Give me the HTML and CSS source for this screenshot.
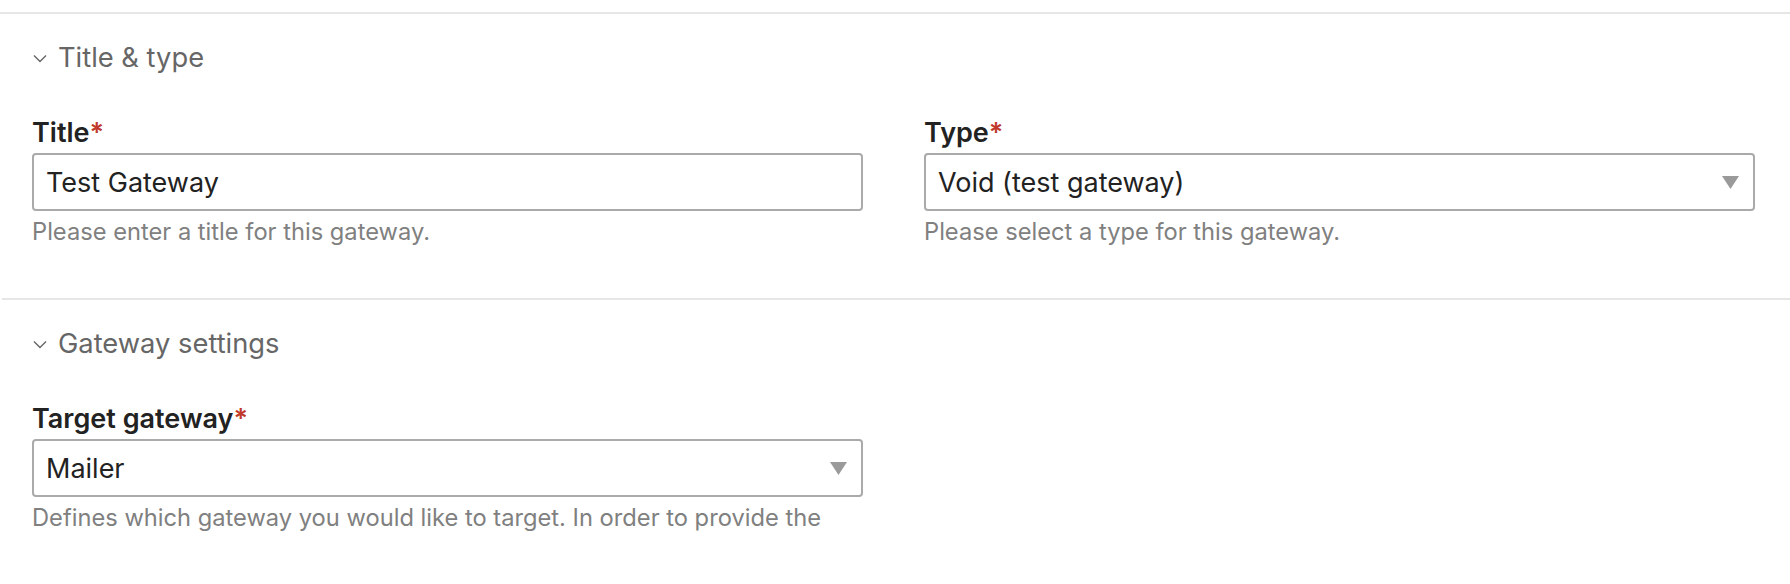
FILE: index.html
```html
<!DOCTYPE html>
<html lang="en">
<head>
<meta charset="utf-8">
<title>Gateway</title>
<link rel="stylesheet" href="styles.css">
</head>
<body>
<div class="page">
  <section class="section">
    <h2 class="section-title">
      <svg class="chev" width="14" height="9" viewBox="0 0 14 9"><path d="M1 1.5 L7 7.5 L13 1.5" fill="none" stroke="#666" stroke-width="1.4"/></svg>
      <span>Title &amp; type</span>
    </h2>
    <div class="fields">
      <div class="field">
        <label class="label">Title<span class="req">*</span></label>
        <input class="control" type="text" value="Test Gateway">
        <div class="help">Please enter a title for this gateway.</div>
      </div>
      <div class="field">
        <label class="label">Type<span class="req">*</span></label>
        <div class="control select">
          <span>Void (test gateway)</span>
          <svg class="arrow" width="17" height="13" viewBox="0 0 17 13"><path d="M0 0 H17 L8.5 13 Z" fill="#9a9a9a"/></svg>
        </div>
        <div class="help">Please select a type for this gateway.</div>
      </div>
    </div>
  </section>
  <section class="section second">
    <h2 class="section-title">
      <svg class="chev" width="14" height="9" viewBox="0 0 14 9"><path d="M1 1.5 L7 7.5 L13 1.5" fill="none" stroke="#666" stroke-width="1.4"/></svg>
      <span>Gateway settings</span>
    </h2>
    <div class="fields">
      <div class="field">
        <label class="label">Target gateway<span class="req">*</span></label>
        <div class="control select">
          <span>Mailer</span>
          <svg class="arrow" width="17" height="13" viewBox="0 0 17 13"><path d="M0 0 H17 L8.5 13 Z" fill="#9a9a9a"/></svg>
        </div>
        <div class="help">Defines which gateway you would like to target. In order to provide the</div>
      </div>
    </div>
  </section>
</div>
</body>
</html>
```
FILE: styles.css
```css
html, body {
  margin: 0;
  padding: 0;
  background: #fff;
}
body {
  font-family: Inter, "Noto Sans", "Liberation Sans", sans-serif;
  color: #222;
}
.page {
  padding-top: 12px;
}
.section {
  border-top: 2px solid #e6e6e6;
  padding: 28px 35px 51px 32px;
}
.section.second {
  margin-left: 2px;
  padding-left: 30px;
}
.section-title {
  margin: 0;
  display: flex;
  align-items: center;
  gap: 11px;
  font-size: 27.3px;
  line-height: 32px;
  font-weight: 400;
  color: #666;
}
.chev {
  display: block;
  margin-left: 1px;
  margin-top: 0;
}
.fields {
  margin-top: 44px;
  display: grid;
  grid-template-columns: 1fr 1fr;
  column-gap: 61px;
}
.field {
  display: flex;
  flex-direction: column;
  min-width: 0;
}
.label {
  font-size: 27px;
  line-height: 30px;
  font-weight: 600;
  color: #222;
  margin-bottom: 5px;
}
.req {
  color: #c0392b;
}
.control {
  box-sizing: border-box;
  height: 58px;
  width: 100%;
  border: 2px solid #aaa;
  border-radius: 4px;
  padding: 0 14px 0 12px;
  font-family: Inter, "Noto Sans", "Liberation Sans", sans-serif;
  font-size: 27px;
  color: #222;
  background: #fff;
  outline: none;
}
.select {
  display: flex;
  align-items: center;
  justify-content: space-between;
}
.arrow {
  display: block;
}
.help {
  margin-top: 6px;
  font-size: 23.7px;
  line-height: 30px;
  color: #808080;
  white-space: nowrap;
  overflow: hidden;
}
```
